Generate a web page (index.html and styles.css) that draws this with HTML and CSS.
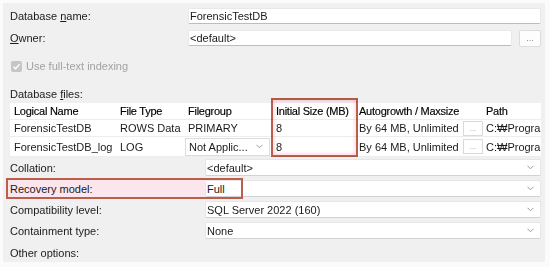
FILE: index.html
```html
<!DOCTYPE html>
<html>
<head>
    <title>New Database - General</title>
    <meta charset="UTF-8">
    <link rel="stylesheet" href="styles.css">
</head>
<body>
    <div class="panel">
        <div class="row">
            <label class="lbl">Database <u>n</u>ame:</label>
            <div class="field">ForensicTestDB</div>
        </div>

        <div class="row owner">
            <label class="lbl"><u>O</u>wner:</label>
            <div class="field">&lt;default&gt;</div>
            <button class="dots">...</button>
        </div>

        <div class="row check-row">
            <span class="cb">
                <svg width="9" height="9" viewBox="0 0 9 9"><polyline points="1.5,4.8 3.6,6.8 7.6,2.2" fill="none" stroke="#fff" stroke-width="1.3"/></svg>
            </span>
            <span class="disabled">Use full-text indexing</span>
        </div>

        <div class="row files-label"><span>Database <u>f</u>iles:</span></div>

        <div class="files">
            <div class="cell head">Logical Name</div>
            <div class="cell head">File Type</div>
            <div class="cell head">Filegroup</div>
            <div class="cell head size">Initial Size (MB)</div>
            <div class="cell head grow">Autogrowth / Maxsize</div>
            <div class="cell head"></div>
            <div class="cell head path">Path</div>

            <div class="cell">ForensicTestDB</div>
            <div class="cell">ROWS Data</div>
            <div class="cell">PRIMARY</div>
            <div class="cell size">8</div>
            <div class="cell grow">By 64 MB, Unlimited</div>
            <div class="cell btn-cell"><span class="mini">...</span></div>
            <div class="cell path">C:₩Program</div>

            <div class="cell">ForensicTestDB_log</div>
            <div class="cell">LOG</div>
            <div class="cell combo-cell">
                <div class="combo">Not Applic...
                    <svg width="7" height="5" viewBox="0 0 7 5"><polyline points="0.5,0.8 3.5,3.8 6.5,0.8" fill="none" stroke="#9a9a9a" stroke-width="1"/></svg>
                </div>
            </div>
            <div class="cell size">8</div>
            <div class="cell grow">By 64 MB, Unlimited</div>
            <div class="cell btn-cell"><span class="mini">...</span></div>
            <div class="cell path">C:₩Program</div>

            <div class="mark"></div>
        </div>

        <div class="opt first">
            <label class="lbl2">Collation:</label>
            <div class="select">&lt;default&gt;
                <svg width="7" height="5" viewBox="0 0 7 5"><polyline points="0.5,0.8 3.5,3.8 6.5,0.8" fill="none" stroke="#9a9a9a" stroke-width="1"/></svg>
            </div>
        </div>

        <div class="opt hl">
            <div class="hl-fill"></div>
            <label class="lbl2">Recovery model:</label>
            <div class="select">Full
                <svg width="7" height="5" viewBox="0 0 7 5"><polyline points="0.5,0.8 3.5,3.8 6.5,0.8" fill="none" stroke="#9a9a9a" stroke-width="1"/></svg>
            </div>
            <div class="hl-box"></div>
        </div>

        <div class="opt">
            <label class="lbl2">Compatibility level:</label>
            <div class="select">SQL Server 2022 (160)
                <svg width="7" height="5" viewBox="0 0 7 5"><polyline points="0.5,0.8 3.5,3.8 6.5,0.8" fill="none" stroke="#9a9a9a" stroke-width="1"/></svg>
            </div>
        </div>

        <div class="opt">
            <label class="lbl2">Containment type:</label>
            <div class="select">None
                <svg width="7" height="5" viewBox="0 0 7 5"><polyline points="0.5,0.8 3.5,3.8 6.5,0.8" fill="none" stroke="#9a9a9a" stroke-width="1"/></svg>
            </div>
        </div>

        <div class="row other">Other options:</div>
    </div>
</body>
</html>
```

FILE: styles.css
```css
body {
    margin: 0;
    background: #fbfbfb;
    font-family: "Liberation Sans", Arial, sans-serif;
    font-size: 11px;
    color: #1b1b1b;
}

.panel {
    margin: 3px;
    width: 542px;
    height: 259px;
    box-sizing: border-box;
    background: #f0f0f0;
    padding: 5px 4px 0 7px;
    display: flex;
    flex-direction: column;
}

.row {
    display: flex;
    align-items: center;
    height: 16px;
    flex: none;
}

.owner {
    margin-top: 6px;
}

.lbl {
    width: 178px;
    flex: none;
}

.field {
    flex: 1;
    height: 16px;
    box-sizing: border-box;
    background: #fff;
    border: 1px solid #e8e8e8;
    border-bottom-color: #bcbcbc;
    border-radius: 2px;
    padding: 0 1px;
    line-height: 14px;
}

.dots {
    width: 22px;
    height: 17px;
    margin-left: 7px;
    flex: none;
    padding: 0 0 3px;
    background: #fdfdfd;
    border: 1px solid #dcdcdc;
    border-radius: 2px;
    color: #888;
    font-family: inherit;
    font-size: 9px;
    line-height: 9px;
    display: flex;
    align-items: flex-end;
    justify-content: center;
}

.check-row {
    margin-top: 12px;
}

.cb {
    width: 11px;
    height: 11px;
    margin-left: 1px;
    border-radius: 2px;
    background: #c6c6c6;
    display: flex;
    align-items: center;
    justify-content: center;
}

.disabled {
    margin-left: 4px;
    color: #a2a2a2;
}

.files-label {
    margin-top: 12px;
}

.files {
    position: relative;
    margin-top: 1px;
    height: 54px;
    flex: none;
    background: #fff;
    display: grid;
    grid-template-columns: 106px 68px 87px 85px 105px 23px 57px;
    grid-template-rows: 17px 17px 20px;
}

.cell {
    padding: 0 4px;
    display: flex;
    align-items: center;
    border-bottom: 1px solid #ededed;
    white-space: nowrap;
    overflow: hidden;
}

.head {
    color: #000;
    letter-spacing: -0.25px;
    -webkit-text-stroke: 0.15px #000;
}

.cell.size {
    padding-left: 5px;
}

.cell.grow {
    padding-left: 3px;
    padding-right: 0;
}

.cell.path {
    padding-left: 2px;
    padding-right: 0;
}

.btn-cell {
    padding: 0 1px 0 2px;
}

.mini {
    width: 20px;
    height: 15px;
    box-sizing: border-box;
    background: #fff;
    border: 1px solid #dadada;
    color: #999;
    font-size: 8px;
    display: flex;
    align-items: flex-end;
    justify-content: center;
    padding-bottom: 2px;
    line-height: 8px;
}

.combo-cell {
    padding: 0 1px;
}

.combo {
    flex: 1;
    height: 18px;
    box-sizing: border-box;
    border: 1px solid #dcdcdc;
    background: #fff;
    padding: 0 6px 0 3px;
    display: flex;
    align-items: center;
    justify-content: space-between;
}

.mark {
    position: absolute;
    left: 261px;
    top: -5px;
    width: 87px;
    height: 59px;
    box-sizing: border-box;
    border: 2px solid #bd5e4c;
    box-shadow: inset 0 0 4px 1px #fbd3dc;
    mix-blend-mode: multiply;
    pointer-events: none;
}

.opt {
    position: relative;
    display: flex;
    align-items: center;
    height: 17px;
    margin-top: 4px;
    flex: none;
}

.opt.first {
    margin-top: 2px;
}

.lbl2 {
    width: 195px;
    flex: none;
    position: relative;
}

.select {
    flex: 1;
    height: 17px;
    box-sizing: border-box;
    background: #fff;
    border: 1px solid #e6e6e6;
    border-bottom-color: #d2d2d2;
    border-radius: 2px;
    padding: 0 6px 0 1px;
    display: flex;
    align-items: center;
    justify-content: space-between;
    position: relative;
}

.hl-fill {
    position: absolute;
    left: -4px;
    top: -2px;
    width: 199px;
    height: 21px;
    background: #fce6ee;
}

.hl-box {
    position: absolute;
    left: -4px;
    top: -2px;
    width: 237px;
    height: 21px;
    box-sizing: border-box;
    border: 2px solid #bd5e4c;
    pointer-events: none;
}

.other {
    margin-top: 6px;
}
```
